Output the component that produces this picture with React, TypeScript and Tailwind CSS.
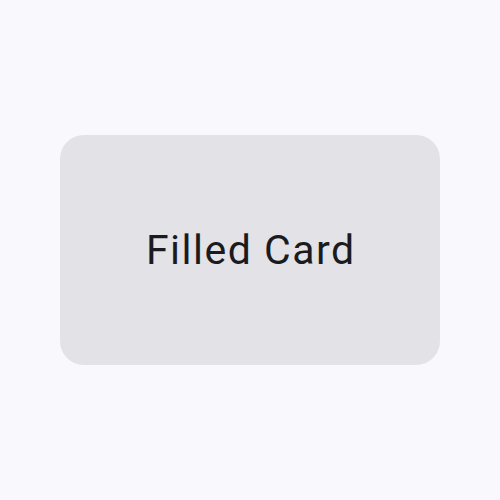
export default function App() {
  return (
    <div className="flex h-[500px] w-[500px] items-center justify-center bg-[#f8f8fd]">
      <div className="flex h-[230px] w-[380px] items-center justify-center rounded-[24px] bg-[#e2e2e7]">
        <span className="pl-[1.5px] text-[41px] leading-none tracking-[1.5px] text-[#1b1b1f] [font-family:Roboto,sans-serif]">
          Filled Card
        </span>
      </div>
    </div>
  )
}
